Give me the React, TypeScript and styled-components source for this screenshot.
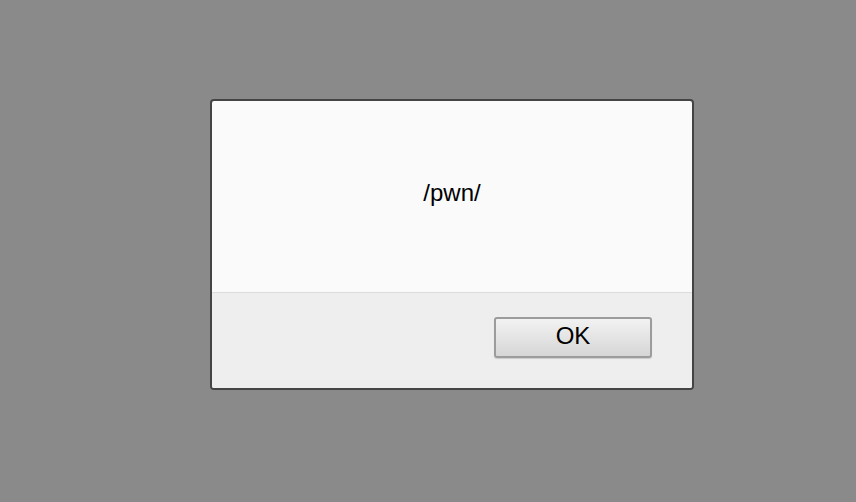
import React from "react";
import styled, { createGlobalStyle } from "styled-components";

const Global = createGlobalStyle`
  html, body { margin: 0; padding: 0; }
  body {
    background: #8a8a8a;
    width: 856px;
    height: 502px;
    overflow: hidden;
    font-family: "Liberation Sans", Arial, sans-serif;
  }
`;

const Page = styled.div`
  width: 856px;
  height: 502px;
  padding: 99px 0 0 210px;
  box-sizing: border-box;
`;

const Dialog = styled.div`
  width: 484px;
  height: 291px;
  box-sizing: border-box;
  border: 2px solid #444444;
  border-radius: 4px;
  background: #fafafa;
  display: flex;
  flex-direction: column;
  overflow: hidden;
`;

const Message = styled.div`
  height: 192px;
  display: flex;
  justify-content: center;
  align-items: center;
  padding-bottom: 8px;
  font-size: 24px;
  color: #000;
  border-bottom: 1px solid #dcdcdc;
  box-sizing: border-box;
`;

const Footer = styled.div`
  flex: 1;
  background: #eeeeee;
  display: flex;
  justify-content: flex-end;
  align-items: flex-start;
  padding: 24px 40px 0 0;
`;

const Button = styled.button`
  width: 158px;
  height: 41px;
  box-sizing: border-box;
  border: 2px solid #9c9c9c;
  border-radius: 3px;
  background: linear-gradient(#f2f2f2, #d6d6d6);
  box-shadow: 0 1px 1px rgba(0, 0, 0, 0.15);
  font-family: "Liberation Sans", Arial, sans-serif;
  font-size: 24px;
  color: #000;
  padding: 0 0 3px 0;
`;

export default function App() {
  return (
    <>
      <Global />
      <Page>
        <Dialog>
          <Message>/pwn/</Message>
          <Footer>
            <Button>OK</Button>
          </Footer>
        </Dialog>
      </Page>
    </>
  );
}
